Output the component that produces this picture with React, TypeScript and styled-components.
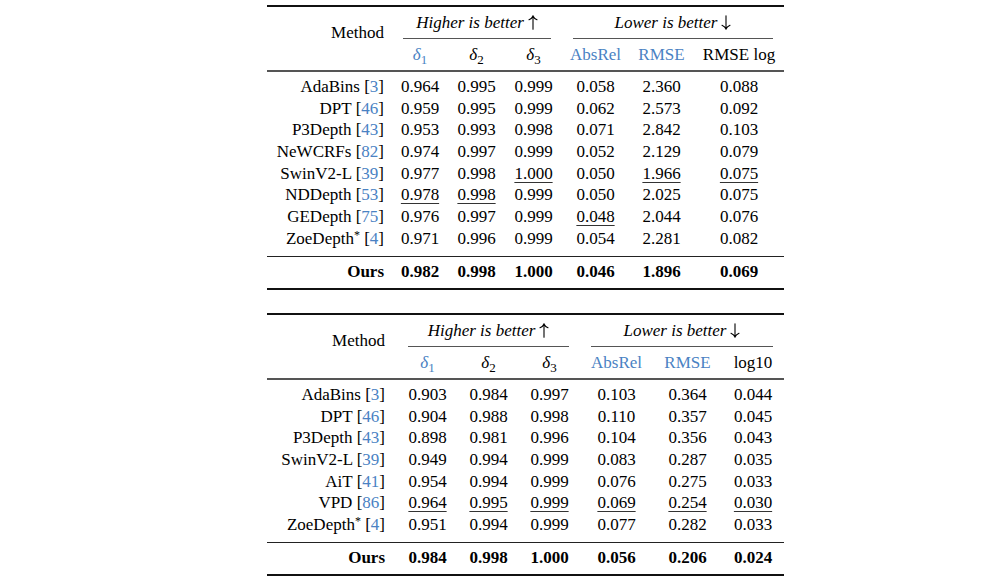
import styled, { createGlobalStyle } from 'styled-components';

const GlobalStyle = createGlobalStyle`
  html, body {
    margin: 0;
    background: #fff;
  }
  body {
    font-family: "Liberation Serif", "Times New Roman", serif;
    color: #000;
  }
`;

const BLUE = '#4a82c3';

const Page = styled.main`
  display: flex;
  flex-direction: column;
  gap: 23px;
  padding: 5px 0 0 267px;
`;

const Table = styled.section`
  width: 517px;
  font-size: 17px;
`;

const Rule = styled.div<{ $h: number; $c?: string }>`
  height: ${p => p.$h}px;
  background: ${p => p.$c ?? '#111'};
`;

const HeadGrid = styled.div<{ $cols: string }>`
  display: grid;
  grid-template-columns: ${p => p.$cols};
  grid-template-rows: 31px 1px 31px;
`;

const MethodHead = styled.div<{ $pad: number }>`
  grid-row: 1 / 4;
  grid-column: 1;
  align-self: center;
  text-align: right;
  padding: 0 ${p => p.$pad}px 11px 0;
`;

const GroupTitle = styled.div<{ $span: string }>`
  grid-row: 1;
  grid-column: ${p => p.$span};
  font-style: italic;
  text-align: center;
  line-height: 31px;
  white-space: nowrap;
`;

const ArrowSvg = styled.svg`
  width: 10px;
  height: 15px;
  margin-left: 4px;
  vertical-align: -2px;
`;

function Arrow({ down }: { down?: boolean }) {
  return (
    <ArrowSvg viewBox="0 0 10 15" fill="none" stroke="#000" strokeWidth="1.1" strokeLinecap="round">
      {down ? (
        <path d="M5 0.8V14M1 10.2Q4 11.5 5 14Q6 11.5 9 10.2" />
      ) : (
        <path d="M5 14.2V1M1 4.8Q4 3.5 5 1Q6 3.5 9 4.8" />
      )}
    </ArrowSvg>
  );
}

const CmidRule = styled.div<{ $span: string }>`
  grid-row: 2;
  grid-column: ${p => p.$span};
  margin: 0 11px;
  background: #555;
`;

const SubHead = styled.div<{ $col: number; $blue?: boolean }>`
  grid-row: 3;
  grid-column: ${p => p.$col};
  text-align: center;
  line-height: 31px;
  white-space: nowrap;
  color: ${p => (p.$blue ? BLUE : '#000')};
`;

const Greek = styled.i`
  font-style: italic;
`;

const Sub = styled.span`
  font-size: 13px;
  line-height: 0;
  vertical-align: -4px;
`;

const Body = styled.div`
  padding: 4px 0 6px;
`;

const Row = styled.div<{ $cols: string; $bold?: boolean }>`
  display: grid;
  grid-template-columns: ${p => p.$cols};
  height: ${p => (p.$bold ? '31.4px' : '21.7px')};
  line-height: ${p => (p.$bold ? '29px' : '21.7px')};
  font-weight: ${p => (p.$bold ? 700 : 400)};
  white-space: nowrap;
`;

const Name = styled.div<{ $pad: number }>`
  text-align: right;
  padding-right: ${p => p.$pad}px;
`;

const Cell = styled.div`
  text-align: center;
`;

const Num = styled.span<{ $u?: boolean }>`
  text-decoration: ${p => (p.$u ? 'underline' : 'none')};
  text-decoration-thickness: 1px;
  text-underline-offset: 3px;
  text-decoration-color: #333;
`;

const Cite = styled.span`
  color: ${BLUE};
`;

const Star = styled.span`
  font-size: 12px;
  line-height: 0;
  vertical-align: 5px;
`;

type Entry = { name: string; ref: string; star?: boolean; vals: string[]; u?: number[] };

type Spec = {
  cols: string;
  pad: number;
  last: string;
  rows: Entry[];
  ours: string[];
};

const first: Spec = {
  cols: '125px 56px 57px 57px 67px 65px 90px',
  pad: 8,
  last: 'RMSE log',
  rows: [
    { name: 'AdaBins', ref: '3', vals: ['0.964', '0.995', '0.999', '0.058', '2.360', '0.088'] },
    { name: 'DPT', ref: '46', vals: ['0.959', '0.995', '0.999', '0.062', '2.573', '0.092'] },
    { name: 'P3Depth', ref: '43', vals: ['0.953', '0.993', '0.998', '0.071', '2.842', '0.103'] },
    { name: 'NeWCRFs', ref: '82', vals: ['0.974', '0.997', '0.999', '0.052', '2.129', '0.079'] },
    { name: 'SwinV2-L', ref: '39', vals: ['0.977', '0.998', '1.000', '0.050', '1.966', '0.075'], u: [2, 4, 5] },
    { name: 'NDDepth', ref: '53', vals: ['0.978', '0.998', '0.999', '0.050', '2.025', '0.075'], u: [0, 1] },
    { name: 'GEDepth', ref: '75', vals: ['0.976', '0.997', '0.999', '0.048', '2.044', '0.076'], u: [3] },
    { name: 'ZoeDepth', ref: '4', star: true, vals: ['0.971', '0.996', '0.999', '0.054', '2.281', '0.082'] },
  ],
  ours: ['0.982', '0.998', '1.000', '0.046', '1.896', '0.069'],
};

const second: Spec = {
  cols: '130px 61px 61px 61px 73px 69px 62px',
  pad: 12,
  last: 'log10',
  rows: [
    { name: 'AdaBins', ref: '3', vals: ['0.903', '0.984', '0.997', '0.103', '0.364', '0.044'] },
    { name: 'DPT', ref: '46', vals: ['0.904', '0.988', '0.998', '0.110', '0.357', '0.045'] },
    { name: 'P3Depth', ref: '43', vals: ['0.898', '0.981', '0.996', '0.104', '0.356', '0.043'] },
    { name: 'SwinV2-L', ref: '39', vals: ['0.949', '0.994', '0.999', '0.083', '0.287', '0.035'] },
    { name: 'AiT', ref: '41', vals: ['0.954', '0.994', '0.999', '0.076', '0.275', '0.033'] },
    { name: 'VPD', ref: '86', vals: ['0.964', '0.995', '0.999', '0.069', '0.254', '0.030'], u: [0, 1, 2, 3, 4, 5] },
    { name: 'ZoeDepth', ref: '4', star: true, vals: ['0.951', '0.994', '0.999', '0.077', '0.282', '0.033'] },
  ],
  ours: ['0.984', '0.998', '1.000', '0.056', '0.206', '0.024'],
};

function ResultTable({ spec }: { spec: Spec }) {
  return (
    <Table>
      <Rule $h={2} />
      <HeadGrid $cols={spec.cols}>
        <MethodHead $pad={spec.pad}>Method</MethodHead>
        <GroupTitle $span="2 / 5">
          Higher is better
          <Arrow />
        </GroupTitle>
        <GroupTitle $span="5 / 8">
          Lower is better
          <Arrow down />
        </GroupTitle>
        <CmidRule $span="2 / 5" />
        <CmidRule $span="5 / 8" />
        {[1, 2, 3].map(i => (
          <SubHead key={i} $col={i + 1} $blue={i === 1}>
            <Greek>δ</Greek>
            <Sub>{i}</Sub>
          </SubHead>
        ))}
        <SubHead $col={5} $blue>AbsRel</SubHead>
        <SubHead $col={6} $blue>RMSE</SubHead>
        <SubHead $col={7}>{spec.last}</SubHead>
      </HeadGrid>
      <Rule $h={2} $c="#555" />
      <Body>
        {spec.rows.map(r => (
          <Row key={r.name} $cols={spec.cols}>
            <Name $pad={spec.pad}>
              {r.name}
              {r.star && <Star>*</Star>} [<Cite>{r.ref}</Cite>]
            </Name>
            {r.vals.map((v, i) => (
              <Cell key={i}>
                <Num $u={r.u?.includes(i)}>{v}</Num>
              </Cell>
            ))}
          </Row>
        ))}
      </Body>
      <Rule $h={1} $c="#222" />
      <Row $cols={spec.cols} $bold>
        <Name $pad={spec.pad}>Ours</Name>
        {spec.ours.map((v, i) => (
          <Cell key={i}>{v}</Cell>
        ))}
      </Row>
      <Rule $h={2} />
    </Table>
  );
}

export default function App() {
  return (
    <>
      <GlobalStyle />
      <Page>
        <ResultTable spec={first} />
        <ResultTable spec={second} />
      </Page>
    </>
  );
}
